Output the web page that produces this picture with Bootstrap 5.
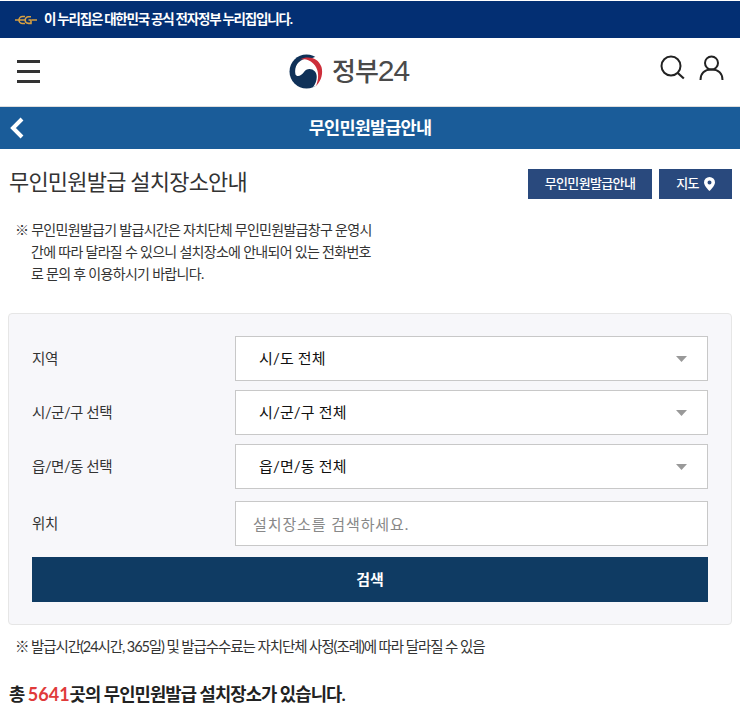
<!DOCTYPE html>
<html lang="ko">
<head>
<meta charset="utf-8">
<title>무인민원발급안내</title>
<link rel="stylesheet" href="https://cdn.jsdelivr.net/npm/bootstrap@5.3.0/dist/css/bootstrap.min.css">
<style>
body{font-family:Lato,"Noto Sans CJK KR",sans-serif;color:#222;background:#fff;letter-spacing:-.05em;padding-top:1px;height:714px;overflow:hidden}
.gov-strip{height:37px;background:#032f73;color:#fff;font-size:13.5px;font-weight:700;padding-left:15px;gap:7px;letter-spacing:-.09em}
.site-head{height:69px;border-bottom:1px solid #ddd;padding:0 17px}
.burger{width:23px;gap:7px;margin-top:-2px}
.burger span{display:block;height:3px;background:#333}
.brand{left:289px;top:15px;gap:8px;color:#4a4a4a}
.brand-txt{font-size:26px;line-height:36px;letter-spacing:-.04em;font-weight:500}
.brand-num{font-family:"Liberation Sans",sans-serif;font-size:30px;font-weight:400;letter-spacing:-.03em}
.head-icons{gap:13px;margin-top:-8px;margin-right:-1px}
.page-bar{height:42px;background:#1a5c99;color:#fff;font-size:17.5px;font-weight:700}
.back-mark{left:9px;top:9px}
.intro{padding:20px 8px 0 9px}
.page-title{font-size:22px;font-weight:400;margin:0 0 4px;color:#333;letter-spacing:-.037em;line-height:26px}
.act-group{column-gap:7px}
.act-btn{height:30px;background:#29497d;color:#fff;font-size:13px;font-weight:500;border:0;border-radius:0;padding:0;display:flex;align-items:center;justify-content:center;gap:5px;letter-spacing:-.05em}
.act-btn:hover{background:#29497d;color:#fff}
.w-guide{width:124px}.w-map{width:73px}
.note{font-size:14px;line-height:22px;margin:20px 0 0 15px;padding-left:16px;text-indent:-16px;width:358px;color:#333;letter-spacing:-.05em;word-break:break-all}
.search-panel{margin:28px 8px 0;height:312px;background:#f7f7fa;border:1px solid #e6e6e6;border-radius:4px;padding:22px 23px}
.form-line{margin-bottom:9px}
.form-line-last{margin-bottom:12px}
.field-label{width:203px;flex:none;font-size:14.5px;color:#333;letter-spacing:-.03em}
.field-ctl{height:45px;flex:1;border:1px solid #c8c8c8;border-radius:0;font-size:15px;color:#111;padding:0 23px;letter-spacing:.01em;background-color:#fff}
select.field-ctl{background-image:url("data:image/svg+xml,%3Csvg xmlns='http://www.w3.org/2000/svg' width='11' height='7'%3E%3Cpath d='M0 0h11L5.500 7z' fill='%23999'/%3E%3C/svg%3E");background-position:right 20px center;background-size:11px 6px}
input.field-ctl{padding-left:17px;letter-spacing:.06em}
input.field-ctl::placeholder{color:#888;opacity:1}
.go-btn{height:45px;background:#0f3b63;border:0;border-radius:0;color:#fff;font-size:15px;font-weight:700;margin-top:-1px}
.go-btn:hover{background:#0f3b63;color:#fff}
.fine{font-size:14.5px;margin:12px 0 0 15px;line-height:20px;color:#333;letter-spacing:-.075em}
.total{font-size:17.7px;font-weight:700;margin:25px 0 0 9px;line-height:24px;color:#222;letter-spacing:-.05em}
.total b{color:#e03a3a;font-weight:700;font-size:18px;letter-spacing:0}
</style>
</head>
<body>
<div class="gov-strip d-flex align-items-center">
  <svg width="22" height="10" viewBox="0 0 22 10" aria-hidden="true"><path d="M0 5h6M17 5h5" stroke="#d8a040" stroke-width="1.600"/><path d="M10 1.500H7.500a3.500 3.500 0 0 0 0 7H10M6 5h4M16 1.800h-2.500a3.300 3.300 0 0 0 0 6.600H16V5h-2.500" fill="none" stroke="#d8a040" stroke-width="1.600"/></svg>
  <span>이 누리집은 대한민국 공식 전자정부 누리집입니다.</span>
</div>
<header class="site-head position-relative d-flex align-items-center justify-content-between">
  <div class="burger d-flex flex-column"><span></span><span></span><span></span></div>
  <div class="brand position-absolute d-flex align-items-center">
    <svg width="35" height="35" viewBox="0 0 35 35" aria-hidden="true">
      <circle cx="17.500" cy="17.500" r="17" fill="#0f3158"/>
      <path d="M27 2.500A17 17 0 0 1 24 33.200C28 28 29 21 26 17.500 22.500 13.500 17 14.500 15 18 13 21.500 8 23.500 6.500 20.500 4.500 12 10.500 4.500 19 4.500 22 4.500 25 3.500 27 2.500Z" fill="#fff"/>
      <path d="M11 5.500C19 1.500 29 3.500 32.500 13 34 19 33 26 27 32 30 25 30 17 26 11.500 22 6 16 4.500 11 5.500Z" fill="#cd2e3a"/>
    </svg>
    <span class="brand-txt">정부<span class="brand-num">24</span></span>
  </div>
  <div class="head-icons d-flex align-items-center">
    <svg width="26" height="26" viewBox="0 0 26 26" aria-hidden="true"><circle cx="11" cy="11" r="9.500" fill="none" stroke="#222" stroke-width="2"/><path d="M17.800 18l6 5.500" stroke="#222" stroke-width="2.200" fill="none"/></svg>
    <svg width="25" height="26" viewBox="0 0 25 26" aria-hidden="true"><circle cx="12.500" cy="8" r="6.500" fill="none" stroke="#222" stroke-width="2"/><path d="M1.500 25c0-6.500 4-10.500 11-10.500s11 4 11 10.500" fill="none" stroke="#222" stroke-width="2"/></svg>
  </div>
</header>
<div class="page-bar position-relative d-flex align-items-center justify-content-center">
  <svg class="back-mark position-absolute" width="16" height="24" viewBox="0 0 16 24" aria-hidden="true"><path d="M13 3L4 12l9 9" fill="none" stroke="#fff" stroke-width="4"/></svg>
  <span>무인민원발급안내</span>
</div>
<main>
  <div class="intro d-flex align-items-center justify-content-between">
    <h1 class="page-title">무인민원발급 설치장소안내</h1>
    <div class="d-flex act-group">
      <a class="btn act-btn w-guide" href="#">무인민원발급안내</a>
      <a class="btn act-btn w-map" href="#">지도
        <svg width="11" height="14" viewBox="0 0 11 14" aria-hidden="true"><path fill-rule="evenodd" d="M5.500 0a5.500 5.500 0 0 1 5.500 5.500C11 9 5.500 14 5.500 14S0 9 0 5.500A5.500 5.500 0 0 1 5.500 0zm0 3.500a2 2 0 1 0 0 4 2 2 0 0 0 0-4z" fill="#fff"/></svg>
      </a>
    </div>
  </div>
  <p class="note">※ 무인민원발급기 발급시간은 자치단체 무인민원발급창구 운영시간에 따라 달라질 수 있으니 설치장소에 안내되어 있는 전화번호로 문의 후 이용하시기 바랍니다.</p>
  <form class="search-panel">
    <div class="d-flex align-items-center form-line">
      <label class="field-label">지역</label>
      <select class="form-select field-ctl"><option>시/도 전체</option></select>
    </div>
    <div class="d-flex align-items-center form-line">
      <label class="field-label">시/군/구 선택</label>
      <select class="form-select field-ctl"><option>시/군/구 전체</option></select>
    </div>
    <div class="d-flex align-items-center form-line-last">
      <label class="field-label">읍/면/동 선택</label>
      <select class="form-select field-ctl"><option>읍/면/동 전체</option></select>
    </div>
    <div class="d-flex align-items-center form-line-last">
      <label class="field-label">위치</label>
      <input class="form-control field-ctl" type="text" placeholder="설치장소를 검색하세요.">
    </div>
    <button type="button" class="btn go-btn w-100">검색</button>
  </form>
  <p class="fine">※ 발급시간(24시간, 365일) 및 발급수수료는 자치단체 사정(조례)에 따라 달라질 수 있음</p>
  <p class="total">총 <b>5641</b>곳의 무인민원발급 설치장소가 있습니다.</p>
</main>
</body>
</html>
